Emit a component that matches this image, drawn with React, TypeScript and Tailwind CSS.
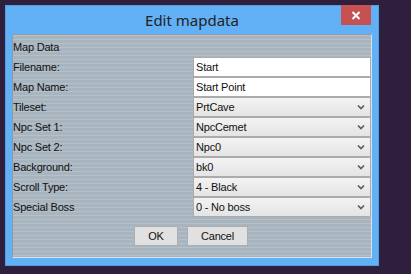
const labelFont = "font-['Liberation_Sans',Arial,sans-serif]"

function Chevron() {
  return (
    <svg width="8" height="6" viewBox="0 0 8 6" className="shrink-0">
      <path d="M1 1.5 L4 4.5 L7 1.5" fill="none" stroke="#5a5a5a" strokeWidth="1.6" />
    </svg>
  )
}

function TextField({ value }: { value: string }) {
  return (
    <div className="w-[178px] h-[20px] bg-white border border-[#ababab] flex items-center pl-[2px] text-[#111]">
      {value}
    </div>
  )
}

function SelectField({ value }: { value: string }) {
  return (
    <div className="w-[178px] h-[20px] bg-[linear-gradient(180deg,#f3f3f3,#e4e4e4)] border border-[#ababab] flex items-center justify-between pl-[2px] pr-[5px] text-[#111]">
      <span>{value}</span>
      <Chevron />
    </div>
  )
}

const rows: { label: string; value: string; select: boolean }[] = [
  { label: 'Filename:', value: 'Start', select: false },
  { label: 'Map Name:', value: 'Start Point', select: false },
  { label: 'Tileset:', value: 'PrtCave', select: true },
  { label: 'Npc Set 1:', value: 'NpcCemet', select: true },
  { label: 'Npc Set 2:', value: 'Npc0', select: true },
  { label: 'Background:', value: 'bk0', select: true },
  { label: 'Scroll Type:', value: '4 - Black', select: true },
  { label: 'Special Boss', value: '0 - No boss', select: true },
]

export default function App() {
  return (
    <div className="w-[411px] h-[274px] bg-[#2f1e3c] pt-[5px] pl-[5px]">
      <div className="relative w-[374px] h-[261px] bg-[#62b1f7] border border-[#4f9fe4] flex flex-col">
        <div className="h-[28px] flex items-center justify-center text-[15px] text-[#222] font-['Noto_Sans',sans-serif]">
          Edit mapdata
        </div>
        <div className="absolute right-[7px] top-[-1px] w-[30px] h-[20px] bg-[#c75050] flex items-center justify-center">
          <svg width="10" height="9" viewBox="0 0 10 9">
            <path d="M1.5 1 L8.5 8 M8.5 1 L1.5 8" stroke="#fff" strokeWidth="2" />
          </svg>
        </div>
        <div
          className={`ml-[6px] w-[360px] h-[224px] border border-t-[#8f9ba5] border-l-[#8f9ba5] border-b-[#d8e2ea] border-r-[#d8e2ea] bg-[#a8b4be] bg-[image:repeating-linear-gradient(180deg,#b4c0ca_0px,#b4c0ca_1px,#a8b4be_1px,#a8b4be_4px)] text-[11px] tracking-[-0.2px] ${labelFont}`}
        >
          <div className="mt-[2px] h-[20px] flex items-center text-[#111]">Map Data</div>
          {rows.map((r) => (
            <div key={r.label} className="h-[20px] flex items-center">
              <div className="w-[180px] text-[#111]">{r.label}</div>
              {r.select ? <SelectField value={r.value} /> : <TextField value={r.value} />}
            </div>
          ))}
          <div className="mt-[9px] flex gap-[9px] pl-[121px]">
            <div className="w-[44px] h-[20px] bg-[#e1e1e1] border border-[#adadad] flex items-center justify-center text-[#111]">
              OK
            </div>
            <div className="w-[61px] h-[20px] bg-[#e1e1e1] border border-[#adadad] flex items-center justify-center text-[#111]">
              Cancel
            </div>
          </div>
        </div>
      </div>
    </div>
  )
}
